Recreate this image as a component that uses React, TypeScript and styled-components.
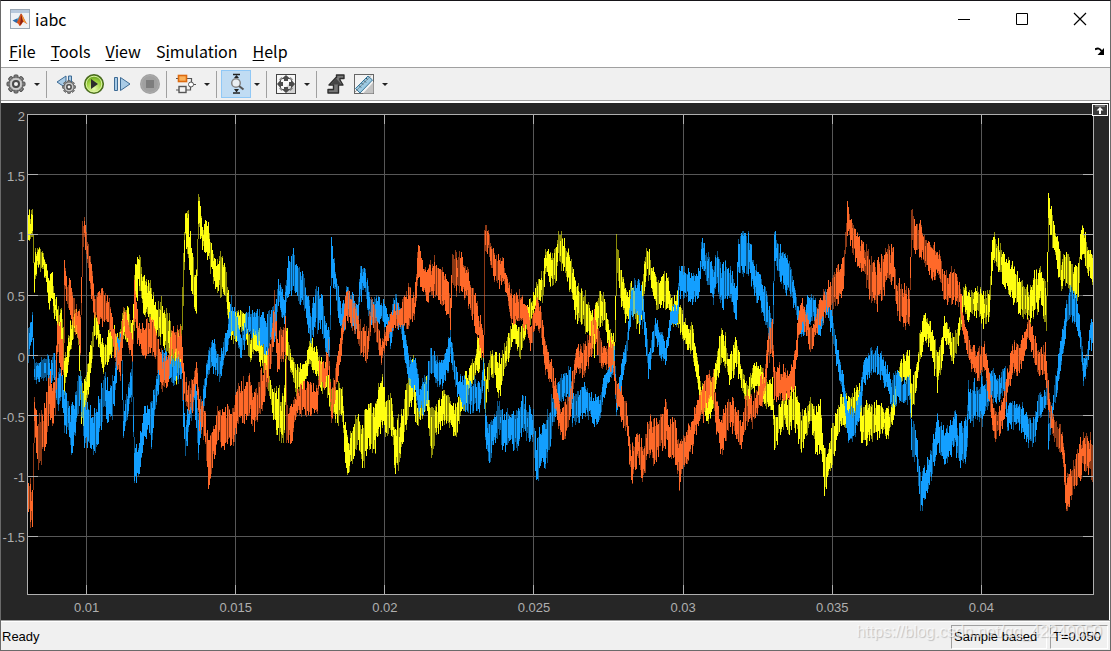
import React from "react";
import styled, { createGlobalStyle } from "styled-components";

const GlobalStyle = createGlobalStyle`
  * { box-sizing: border-box; }
  html, body, #root { height: 100%; }
  body { margin: 0; background: #1b1b1b; }
`;

const ui = `"Noto Sans CJK SC", "Noto Sans", sans-serif`;
const plain = `"Liberation Sans", Arial, sans-serif`;

const Window = styled.div`
  display: flex;
  flex-direction: column;
  position: relative;
  min-height: 100vh;
  background: #fff;
  border: 1px solid #6a6a6a;
  border-top-color: #161418;
`;

const TitleBar = styled.header`
  display: flex;
  align-items: center;
  height: 36px;
  padding-left: 9px;
  gap: 5px;
  color: #000;
  font: 16px/24px ${ui};
`;

const Title = styled.h1`
  flex: 1;
  margin: 0;
  font: inherit;
`;

const WindowButton = styled.button`
  display: grid;
  place-items: center;
  width: 58px;
  height: 36px;
  padding: 0;
  border: 0;
  background: none;
`;

const WindowButtons = styled.div`
  display: flex;
  padding-right: 1px;
`;

const MenuBar = styled.nav`
  display: flex;
  align-items: center;
  height: 30px;
  padding: 0 5px 2px 8px;
  gap: 15px;
`;

const MenuItem = styled.button`
  padding: 0;
  border: 0;
  background: none;
  color: #000;
  font: 16px/24px ${ui};
  u { text-underline-offset: 2px; text-decoration-thickness: 1px; }
`;

const DockButton = styled.button`
  display: grid;
  margin-left: auto;
  padding: 0;
  border: 0;
  background: none;
`;

const ToolBar = styled.div`
  display: flex;
  align-items: center;
  height: 34px;
  padding: 0 2px 0 1px;
  background: #f0f0f0;
  border-top: 1px solid #a0a0a0;
  border-bottom: 1px solid #a0a0a0;
`;

const ToolButton = styled.button<{ $active?: boolean }>`
  display: grid;
  place-items: center;
  width: ${(p) => (p.$active ? 30 : 28)}px;
  height: 28px;
  margin: 0 ${(p) => (p.$active ? -1 : 0)}px;
  padding: 0;
  border: 1px solid ${(p) => (p.$active ? "#90c8f6" : "transparent")};
  background: ${(p) => (p.$active ? "#c0dcf3" : "none")};
`;

const MenuArrow = styled.button`
  display: grid;
  place-items: center;
  width: 14px;
  height: 28px;
  padding: 0;
  border: 0;
  background: none;
  &::after {
    content: "";
    border: 3px solid transparent;
    border-top-color: #222;
    border-bottom: 0;
  }
`;

const Divider = styled.span`
  width: 1px;
  height: 27px;
  margin: 0 5px 0 2px;
  background: #a0a0a0;
`;

const Scope = styled.main`
  flex: 1;
  display: grid;
  grid-template-columns: 26px 1fr 15px;
  grid-template-rows: 1fr 25px;
  margin: 2px 1px 0 0;
  background: #262626;
  color: #afafaf;
  font: 13px/16px ${plain};
`;

const YAxis = styled.div`
  display: grid;
  grid-template-rows: repeat(8, 1fr);
  padding: 6px 2px 5px 0;
  text-align: right;
`;

const PlotArea = styled.div`
  min-height: 300px;
  padding-top: 11px;
  display: flex;
  svg { flex: 1; width: 100%; height: 100%; min-height: 0; display: block; }
`;

const Side = styled.div`
  display: flex;
  justify-content: flex-end;
  align-items: flex-start;
  padding-right: 1px;
`;

const MaximizeButton = styled.button`
  flex: none;
  position: relative;
  display: grid;
  place-items: center;
  width: 16px;
  height: 12px;
  margin-top: 1px;
  padding: 0;
  border: 1px solid #fff;
  background: #3a3a3a;
`;

const XAxis = styled.div`
  grid-column: 1 / -1;
  display: grid;
  grid-template-columns: repeat(7, 1fr);
  padding: 5px 53px 0 11px;
  text-align: center;
`;

const StatusBar = styled.footer`
  display: flex;
  height: 30px;
  padding: 4px 2px 1px 1px;
  gap: 3px;
  border-top: 1px solid #a0a0a0;
  box-shadow: inset 0 1px #fff;
  background: #f0f0f0;
  color: #000;
  font: 13px/22px ${plain};
`;

const Message = styled.span`
  flex: 1;
  padding-top: 1px;
`;

const Field = styled.span<{ $width: number }>`
  width: ${(p) => p.$width}px;
  padding-left: 2px;
  border: 1px solid #a0a0a0;
  border-right-color: #fff;
  border-bottom-color: #fff;
  white-space: nowrap;
`;

const Watermark = styled.span`
  position: absolute;
  right: 8px;
  bottom: 8px;
  color: rgba(255, 255, 255, 0.65);
  font: 16px/20px ${plain};
  text-shadow: 1px 1px 1px rgba(0, 0, 0, 0.2);
  pointer-events: none;
`;

/* Each trace is a list of x, upper bound, lower bound triples. */
const yellow = [
  28,220,243, 30,215,243, 32,207,233, 34,258,285, 37,249,265, 43,253,270, 46,263,283, 49,283,305, 51,272,293, 55,297,320, 58,313,333, 62,318,350,
  64,355,390, 66,358,376, 70,325,347, 74,312,333, 78,317,340, 81,393,427, 85,380,410, 88,362,392, 91,347,367, 94,313,333, 98,323,343, 103,350,370,
  108,337,358, 112,325,348, 118,337,356, 123,313,333, 128,312,336, 132,323,340, 134,280,320, 138,255,283, 141,267,300, 145,287,313, 151,290,323,
  155,310,333, 161,304,337, 166,317,350, 172,333,373, 176,347,376, 181,327,360, 183,263,297, 185,209,233, 188,222,260, 192,260,290, 196,280,313,
  198,195,223, 202,227,247, 207,227,253, 212,247,273, 217,267,292, 221,257,287, 226,280,303, 231,313,333, 234,317,340, 240,313,327, 245,317,330,
  249,340,360, 254,327,347, 260,337,360, 267,353,377, 270,383,397, 273,393,417, 278,397,433, 284,397,437, 286,330,353, 290,350,367, 295,370,390,
  300,370,390, 305,363,380, 310,337,360, 316,353,373, 321,363,387, 327,367,390, 331,387,410, 337,387,417, 342,383,420, 344,423,450, 348,447,473,
  353,427,453, 358,417,440, 362,427,467, 368,410,440, 373,413,453, 381,380,420, 386,407,433, 391,397,427, 395,433,470, 401,417,450, 405,397,427,
  409,380,407, 413,363,400, 416,407,423, 420,400,420, 426,380,403, 431,417,453, 436,410,433, 443,397,420, 450,400,423, 454,410,433, 457,407,430,
  460,387,410, 465,380,407, 470,367,383, 474,360,377, 478,340,367, 482,333,353, 485,380,407, 490,353,370, 495,357,377, 499,363,393, 504,350,370,
  509,333,353, 514,320,337, 520,333,353, 526,310,330, 532,300,317, 537,283,300, 542,277,300, 545,252,273, 553,255,282, 556,252,275, 558,230,257,
  563,243,267, 570,260,287, 576,290,317, 583,293,323, 588,307,333, 594,317,350, 599,297,323, 604,297,323, 609,330,350, 614,343,370, 616,242,267,
  621,277,300, 626,297,320, 632,287,313, 639,307,328, 642,287,310, 644,263,287, 647,247,273, 652,270,287, 657,283,307, 662,277,300, 668,283,307,
  672,303,323, 677,297,320, 683,320,337, 688,327,350, 692,327,350, 697,363,380, 701,387,410, 707,393,420, 712,380,407, 716,363,383, 721,330,357,
  725,340,363, 729,363,383, 736,337,363, 741,370,387, 747,387,403, 753,367,387, 761,370,390, 768,387,410, 772,383,403, 774,420,445, 779,410,433,
  784,397,420, 788,403,433, 794,390,420, 801,417,447, 806,410,433, 810,397,417, 815,417,447, 820,410,443, 824,455,487, 828,450,477, 833,427,453,
  839,403,427, 844,398,423, 848,400,420, 854,393,413, 859,387,407, 861,413,443, 866,410,440, 873,410,437, 880,407,430, 889,413,433, 893,397,417,
  898,370,387, 903,360,380, 909,353,377, 911,387,410, 916,370,390, 919,340,360, 924,317,337, 930,327,347, 937,353,383, 940,350,373, 944,320,340,
  949,327,347, 953,343,363, 958,323,343, 963,287,307, 968,297,317, 975,287,310, 983,297,323, 989,293,317, 991,260,284, 993,235,257, 999,247,270,
  1004,260,283, 1009,263,290, 1016,277,303, 1023,283,313, 1029,293,320, 1035,277,307, 1040,273,303, 1046,293,323, 1047,247,280, 1048,193,217,
  1052,217,243, 1056,237,260, 1061,263,287, 1067,253,277, 1073,270,293, 1078,270,295, 1080,240,260, 1082,227,250, 1087,247,267, 1092,260,283,
];

const blue = [
  28,333,357, 30,327,347, 32,313,340, 34,367,380, 40,360,377, 47,358,377, 50,367,383, 54,353,377, 57,380,407, 61,367,393, 64,397,430, 67,403,423,
  71,413,447, 76,397,423, 80,367,393, 83,403,437, 89,410,443, 95,420,450, 100,397,427, 104,373,400, 106,387,417, 111,387,417, 115,367,393,
  117,343,367, 121,333,357, 123,417,440, 127,393,413, 132,363,390, 134,457,482, 139,443,467, 144,413,437, 148,407,427, 151,410,440, 156,380,403,
  160,357,377, 166,353,373, 172,360,380, 181,360,377, 183,400,423, 185,423,452, 189,407,427, 194,377,400, 198,413,450, 202,397,423, 206,367,387,
  209,347,367, 215,343,367, 219,360,380, 226,333,353, 231,303,330, 236,317,337, 241,337,357, 247,310,330, 254,313,333, 260,317,343, 266,323,350,
  272,313,337, 274,313,340, 278,277,300, 284,303,323, 287,263,297, 293,257,287, 299,270,297, 305,287,310, 311,317,343, 316,290,323, 321,297,323,
  326,327,350, 329,337,360, 331,245,270, 336,277,297, 341,313,333, 347,290,317, 357,310,333, 360,270,297, 364,270,290, 370,297,320, 378,300,320,
  386,307,323, 390,323,343, 395,293,317, 400,310,327, 405,337,360, 410,363,387, 415,363,390, 419,387,410, 427,377,403, 430,350,370, 436,360,380,
  442,363,383, 447,350,370, 450,333,357, 454,360,377, 458,380,397, 465,383,407, 473,383,407, 480,387,407, 483,363,387, 485,413,433, 488,433,463,
  494,417,440, 499,403,427, 503,420,447, 509,413,440, 516,417,447, 522,397,427, 528,413,437, 533,413,437, 536,450,480, 541,430,463, 548,417,453,
  553,395,420, 557,387,407, 563,377,397, 570,370,393, 572,397,420, 579,393,417, 586,387,410, 593,400,420, 600,400,420, 603,380,397, 608,367,383,
  614,343,367, 616,397,417, 621,367,387, 627,333,353, 631,287,313, 641,287,317, 644,310,330, 648,357,377, 655,320,337, 660,333,353, 665,347,363,
  671,310,323, 677,307,323, 679,270,293, 686,270,293, 692,280,303, 699,273,293, 701,243,267, 706,253,277, 713,273,297, 717,253,280, 721,273,303,
  727,267,297, 736,287,313, 738,245,273, 743,237,267, 749,240,270, 753,263,290, 759,273,300, 765,293,320, 772,327,347, 774,233,260, 779,250,273,
  786,260,287, 792,277,297, 797,303,323, 801,320,337, 808,300,323, 815,300,317, 818,313,337, 821,310,330, 825,287,310, 831,313,330, 837,347,367,
  843,377,397, 848,417,440, 855,410,433, 860,387,410, 863,367,383, 868,353,373, 876,350,370, 881,357,377, 887,370,387, 891,383,403, 897,373,397,
  903,383,403, 909,377,397, 911,423,447, 916,437,460, 920,480,508, 926,467,490, 931,453,477, 937,420,443, 944,433,460, 950,427,453, 954,410,440,
  958,433,463, 966,420,453, 968,390,423, 975,387,417, 983,383,417, 990,373,397, 997,377,400, 1005,370,393, 1007,407,427, 1014,403,423,
  1022,407,427, 1028,423,442, 1035,417,440, 1038,400,417, 1044,393,410, 1047,383,400, 1048,430,450, 1053,393,410, 1058,360,380, 1064,317,340,
  1069,290,313, 1075,297,320, 1079,320,340, 1083,363,383, 1087,350,367, 1090,320,340, 1092,323,347,
];

const orange = [
  28,487,507, 30,483,517, 32,497,528, 34,402,427, 37,423,460, 42,420,453, 47,400,437, 49,373,410, 52,387,417, 55,373,407, 57,323,353, 60,330,363,
  63,347,377, 64,263,283, 67,283,307, 71,287,313, 76,310,337, 80,320,350, 82,230,257, 84,215,240, 87,240,260, 91,270,297, 94,297,317, 101,293,320,
  109,303,323, 113,327,347, 118,347,373, 120,347,380, 123,307,323, 128,323,343, 132,343,363, 134,287,320, 138,323,343, 143,330,353, 150,320,347,
  155,327,353, 160,353,380, 163,363,390, 168,353,377, 172,330,350, 181,333,360, 183,370,393, 187,387,410, 192,383,407, 196,363,383, 199,397,423,
  204,410,437, 208,450,480, 213,430,457, 219,407,433, 223,420,450, 228,410,437, 233,413,440, 239,387,413, 243,387,420, 249,380,410, 254,397,427,
  260,380,410, 267,360,383, 271,337,357, 274,300,330, 277,343,367, 285,323,350, 286,413,443, 291,407,437, 297,393,413, 304,387,410, 317,390,410,
  319,363,383, 324,367,387, 328,347,370, 331,397,420, 335,373,393, 340,337,357, 346,290,317, 351,297,323, 356,310,330, 360,327,353, 367,333,357,
  371,303,323, 376,317,337, 381,343,360, 386,327,343, 393,310,327, 400,307,327, 408,293,323, 414,297,317, 418,248,273, 423,270,290, 428,270,297,
  435,263,290, 441,273,300, 447,287,310, 450,297,323, 452,257,287, 458,257,287, 463,263,290, 470,283,307, 476,300,327, 480,323,350, 483,337,357,
  484,230,253, 488,233,250, 494,257,277, 499,260,283, 502,257,277, 508,283,303, 512,300,323, 519,297,320, 527,307,327, 530,327,347, 536,300,320,
  541,313,333, 545,347,370, 551,363,383, 556,390,413, 560,410,433, 568,403,430, 572,377,397, 576,347,367, 583,350,373, 590,333,357, 594,313,337,
  600,343,363, 606,347,367, 613,340,367, 615,380,397, 620,390,413, 626,403,427, 631,453,480, 637,433,457, 643,453,478, 648,420,450, 654,427,457,
  660,417,447, 666,407,437, 669,430,457, 674,420,450, 679,447,480, 684,437,463, 692,420,447, 697,400,423, 702,390,417, 708,377,400, 713,373,397,
  716,403,427, 721,423,453, 729,400,423, 735,407,430, 741,427,445, 744,410,430, 746,393,417, 752,403,423, 758,387,407, 764,373,397, 768,333,357,
  772,327,350, 774,370,393, 781,370,397, 788,377,397, 794,357,383, 798,320,340, 802,300,320, 807,317,337, 810,333,353, 816,313,333, 820,300,323,
  826,290,310, 833,280,303, 838,270,297, 843,263,290, 845,233,257, 847,208,230, 853,227,250, 860,243,267, 864,247,273, 869,260,290, 876,270,303,
  883,260,290, 888,250,280, 893,253,280, 896,283,307, 902,287,317, 909,297,327, 911,212,237, 915,230,253, 920,227,250, 926,240,263, 932,247,273,
  938,253,273, 944,277,300, 951,273,300, 959,283,303, 962,310,330, 966,330,347, 972,350,370, 977,353,377, 984,347,367, 988,370,393, 994,413,437,
  1000,410,430, 1005,387,410, 1009,363,383, 1013,347,370, 1019,350,370, 1025,333,353, 1028,315,337, 1033,333,353, 1038,353,370, 1045,350,373,
  1047,380,400, 1051,407,430, 1056,423,443, 1062,433,453, 1066,483,510, 1072,470,490, 1078,453,480, 1083,433,463, 1092,443,473,
];

/* Turns the bounds into the rapid switching ripple, one stroke per column. */
function ripple(bounds: number[], seed: number) {
  let state = seed;
  const random = () => {
    state = (state * 1664525 + 1013904223) % 4294967296;
    return state / 4294967296;
  };
  let solid = "";
  let faint = "";
  let i = 0;
  let previousTop = bounds[1];
  let previousBottom = bounds[2];
  for (let x = bounds[0]; x <= 1092; x++) {
    while (i + 5 < bounds.length && bounds[i + 3] < x) i += 3;
    const span = bounds[i + 3] - bounds[i];
    const t = Math.max(0, Math.min(1, (x - bounds[i]) / span));
    const top = bounds[i + 1] + (bounds[i + 4] - bounds[i + 1]) * t;
    const bottom = bounds[i + 2] + (bounds[i + 5] - bounds[i + 2]) * t;
    const size = bottom - top;
    const from = Math.round(top + size * (random() * 0.5 - 0.34));
    const to = Math.round(bottom - size * (random() * 0.5 - 0.34));
    faint += `M${x + 0.5} ${Math.min(from, previousBottom)}V${Math.max(to, previousTop)}`;
    if (random() > 0.2) {
      const inset = random() > 0.5 ? 0 : Math.round(size * random() * 0.3);
      solid += `M${x + 0.5} ${from + inset}V${to - inset}`;
    }
    previousTop = from;
    previousBottom = to;
  }
  return { solid, faint };
}

const traces = [
  { name: "ia", color: "#ffff11", ...ripple(yellow, 7) },
  { name: "ib", color: "#139fff", ...ripple(blue, 21) },
  { name: "ic", color: "#ff6929", ...ripple(orange, 43) },
];

const xTicks = [86.5, 235.5, 384.5, 533.5, 683.5, 832.5, 981.5];
const yTicks = [174.5, 234.5, 295.5, 355.5, 415.5, 476.5, 536.5];

function Plot() {
  return (
    <svg viewBox="27 114 1067 481" preserveAspectRatio="none" shapeRendering="crispEdges" role="img" aria-label="iabc">
      <rect x="27" y="114" width="1067" height="481" fill="#000" />
      <path
        stroke="#575757"
        d={xTicks.map((x) => `M${x} 114V594`).join("") + yTicks.map((y) => `M27 ${y}H1093`).join("")}
      />
      {traces.map((t) => (
        <g key={t.name} stroke={t.color}>
          <path d={t.faint} opacity="0.55" />
          <path d={t.solid} />
        </g>
      ))}
      <path
        stroke="#afafaf"
        fill="none"
        d={
          "M27.5 114.5H1093.5V594.5H27.5Z" +
          xTicks.map((x) => `M${x} 115V124M${x} 585V594`).join("") +
          yTicks.map((y) => `M28 ${y}H38M1083 ${y}H1093`).join("")
        }
      />
    </svg>
  );
}

const gearTeeth = [0, 45, 90, 135, 180, 225, 270, 315];

function GearShape() {
  return (
    <g>
      <g fill="#8b8b8b" stroke="#4c4c4c" strokeWidth="1">
        {gearTeeth.map((a) => (
          <rect key={a} x="-2" y="-9" width="4" height="4" rx="1" transform={`rotate(${a})`} />
        ))}
      </g>
      <circle r="7" fill="#b4b4b4" stroke="#5c5c5c" />
      <circle r="5" fill="none" stroke="#dadada" />
      <circle r="3" fill="#f4f4f4" stroke="#4a4a4a" strokeWidth="2" />
    </g>
  );
}

const Icon = ({ children, size = 20 }: { children: React.ReactNode; size?: number }) => (
  <svg width={size} height={size} viewBox={`0 0 ${size} ${size}`} aria-hidden="true">
    {children}
  </svg>
);

const MatlabIcon = () => (
  <Icon>
    <rect x="0.5" y="0.5" width="19" height="19" fill="#eef1f5" stroke="#9aa7b5" />
    <rect x="1" y="1" width="18" height="3" fill="#b7c8dc" />
    <path d="M2.500 11.500 7 9.500l2.500 2-3 2.500Z" fill="#2c68a8" />
    <path d="M7 9.500c2-.5 2.500-4 4-5l-1 6.500-2 1.500Z" fill="#55a5c4" />
    <path d="M11 4.500c-1 1-2 5.500-4.500 9.500 2-.5 2.500 3 3.500 3 2-1 2-4 3.500-4 1 0 2 1.500 4 2C14.500 12 13 5.500 11 4.500Z" fill="#d9541e" />
    <path d="M11 4.500c0 4-.5 9-1.500 12 2-1 2.500-3 3.500-4Z" fill="#8c1e12" />
    <path d="M11.500 5.500c.5 2 1 5.500 2.500 7.500 1 0 2 1.300 3 1.800C14.500 12 13 7 11.500 5.500Z" fill="#f1a13a" />
  </Icon>
);

const GearIcon = () => (
  <Icon>
    <g transform="translate(10 10)"><GearShape /></g>
  </Icon>
);

const StepBackIcon = () => (
  <Icon>
    <path d="M1 8 10 2v12Z" fill="#a9cbe6" stroke="#3c6a94" />
    <path d="M12.500 2h3v8h-3z" fill="#a9cbe6" stroke="#3c6a94" />
    <g transform="translate(13 13) scale(.72)"><GearShape /></g>
  </Icon>
);

const RunIcon = () => (
  <Icon size={22}>
    <defs>
      <radialGradient id="run" cx=".5" cy=".75" r=".7">
        <stop offset="0" stopColor="#e8fbb0" />
        <stop offset=".6" stopColor="#9ed23c" />
        <stop offset="1" stopColor="#5f9a1d" />
      </radialGradient>
    </defs>
    <circle cx="11" cy="11" r="9.300" fill="url(#run)" stroke="#4a6b20" strokeWidth="1.500" />
    <circle cx="11" cy="11" r="7.800" fill="none" stroke="#dcf2a4" strokeWidth="1" />
    <path d="M8 6v10l7-5Z" fill="#2d2d2d" />
  </Icon>
);

const StepIcon = () => (
  <Icon>
    <path d="M2.500 3.500h3v13h-3z" fill="#a9cbe6" stroke="#3c6a94" />
    <path d="M8.500 3.500v13L18 10Z" fill="#a9cbe6" stroke="#3c6a94" />
  </Icon>
);

const StopIcon = () => (
  <Icon size={22}>
    <circle cx="11" cy="11" r="10" fill="#a0a0a0" />
    <circle cx="11" cy="11" r="8.500" fill="none" stroke="#ababab" />
    <rect x="7" y="7" width="8" height="8" fill="#7d7d7d" />
  </Icon>
);

const BlocksIcon = () => (
  <Icon size={22}>
    <path d="M1 5.500h15.500v4M1 17h14.500v-4M18 11.500h3" fill="none" stroke="#555" strokeWidth="1.200" />
    <rect x="3.500" y="2.500" width="8" height="6" fill="#fbb25a" stroke="#dc6a10" strokeWidth="1.600" />
    <rect x="4" y="13.500" width="7" height="6" fill="#f4f4f4" stroke="#555" strokeWidth="1.400" />
    <circle cx="16" cy="11.500" r="2.500" fill="#fff" stroke="#555" />
  </Icon>
);

const ZoomYIcon = () => (
  <Icon size={22}>
    <path d="M8 1.500h7M8 20h7" stroke="#222" strokeWidth="1.500" />
    <path d="M11.500 2 14 5H9ZM11.500 19.500 14 16H9Z" fill="#222" />
    <circle cx="11" cy="10" r="4.300" fill="#e9eef2" stroke="#858585" strokeWidth="1.500" />
    <path d="m14 13 4.500 3.500" stroke="#555" strokeWidth="2" />
  </Icon>
);

const FitIcon = () => (
  <Icon size={22}>
    <rect x="1.500" y="1.500" width="19" height="19" fill="#f7f7f7" stroke="#444" />
    <path d="M10 20V15l5-5h5v10Z" fill="#d4d4d4" />
    {[0, 90, 180, 270].map((a) => (
      <g key={a} transform={`rotate(${a} 11 11)`} fill="#4a4a4a">
        <path d="m11 2 4.500 4H13v2H9V6H6.500Z" />
        <path d="M4 6.500 6.500 4l1.500 1.500L5.500 8Z" opacity=".6" />
      </g>
    ))}
  </Icon>
);

const TriggerIcon = () => (
  <Icon size={22}>
    <path d="M3 20v-3.500h5.500V12H4l7-7.500h.5V2H19v3.500h-4V7l3 5h-4.500v8Z" fill="#777" stroke="#2e2e2e" strokeWidth="1.400" strokeLinejoin="round" />
    <path d="M11 5.500 5.500 11.500h11Z" fill="#444" />
  </Icon>
);

const MeasureIcon = () => (
  <Icon size={22}>
    <rect x="1.500" y="1.500" width="19" height="19" fill="#f3f3f3" stroke="#666" />
    <path d="M10 20.500 20.500 9v11.500Z" fill="#c4c4c4" />
    <path d="M2.500 15.500 15 3l4.500 4L7 20Z" fill="#9ecbe3" stroke="#3a7798" />
    <path d="m6 12.500 2 2M8.500 10l1.500 1.500M11 7.500l2 2M13 5l1.500 1.500" stroke="#24536e" />
    <path d="M2 19 18 2.500" stroke="#666" strokeWidth=".6" />
  </Icon>
);

export default function App() {
  return (
    <Window>
      <GlobalStyle />
      <TitleBar>
        <MatlabIcon />
        <Title>iabc</Title>
        <WindowButtons>
          <WindowButton aria-label="Minimize">
            <Icon size={14}><path d="M1 7.500h12" stroke="#000" /></Icon>
          </WindowButton>
          <WindowButton aria-label="Maximize">
            <Icon size={14}><path d="M1.500 1.500h11v11h-11z" fill="none" stroke="#000" /></Icon>
          </WindowButton>
          <WindowButton aria-label="Close">
            <Icon size={14}><path d="m1 1 12 12M13 1 1 13" stroke="#000" strokeWidth="1.200" /></Icon>
          </WindowButton>
        </WindowButtons>
      </TitleBar>
      <MenuBar>
        <MenuItem><u>F</u>ile</MenuItem>
        <MenuItem><u>T</u>ools</MenuItem>
        <MenuItem><u>V</u>iew</MenuItem>
        <MenuItem>S<u>i</u>mulation</MenuItem>
        <MenuItem><u>H</u>elp</MenuItem>
        <DockButton aria-label="Dock">
          <Icon size={10}>
            <path d="M0 3.500q4-2.500 6.500 1.500" fill="none" stroke="#000" strokeWidth="2" />
            <path d="M9 2v7H2.500Z" fill="#000" />
          </Icon>
        </DockButton>
      </MenuBar>
      <ToolBar role="toolbar">
        <ToolButton aria-label="Configuration"><GearIcon /></ToolButton>
        <MenuArrow aria-label="Configuration menu" />
        <Divider />
        <ToolButton aria-label="Step back"><StepBackIcon /></ToolButton>
        <ToolButton aria-label="Run"><RunIcon /></ToolButton>
        <ToolButton aria-label="Step forward"><StepIcon /></ToolButton>
        <ToolButton aria-label="Stop" disabled><StopIcon /></ToolButton>
        <Divider />
        <ToolButton aria-label="Highlight block"><BlocksIcon /></ToolButton>
        <MenuArrow aria-label="Highlight menu" />
        <Divider />
        <ToolButton aria-label="Zoom Y" $active><ZoomYIcon /></ToolButton>
        <MenuArrow aria-label="Zoom menu" />
        <Divider />
        <ToolButton aria-label="Fit to view"><FitIcon /></ToolButton>
        <MenuArrow aria-label="Fit menu" />
        <Divider />
        <ToolButton aria-label="Triggers"><TriggerIcon /></ToolButton>
        <ToolButton aria-label="Measurements"><MeasureIcon /></ToolButton>
        <MenuArrow aria-label="Measurements menu" />
      </ToolBar>
      <Scope>
        <YAxis>
          {["2", "1.5", "1", "0.5", "0", "-0.5", "-1", "-1.5"].map((v) => <span key={v}>{v}</span>)}
        </YAxis>
        <PlotArea><Plot /></PlotArea>
        <Side>
          <MaximizeButton aria-label="Maximize axes">
            <Icon size={10}>
              <path d="M0 1h10" stroke="#aaa" />
              <path d="M5 2 8.500 5.500H6V9H4V5.500H1.500Z" fill="#fff" />
            </Icon>
          </MaximizeButton>
        </Side>
        <XAxis>
          {["0.01", "0.015", "0.02", "0.025", "0.03", "0.035", "0.04"].map((v) => <span key={v}>{v}</span>)}
        </XAxis>
      </Scope>
      <StatusBar>
        <Message>Ready</Message>
        <Field $width={96}>Sample based</Field>
        <Field $width={58}>T=0.050</Field>
      </StatusBar>
      <Watermark>https://blog.csdn.net/qq_42249050</Watermark>
    </Window>
  );
}
